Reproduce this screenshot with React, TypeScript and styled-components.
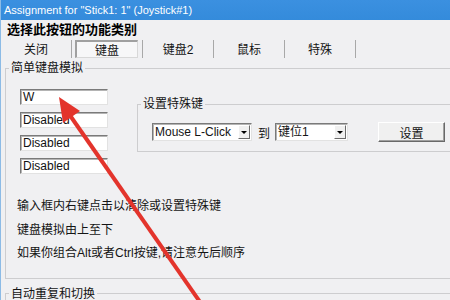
import styled, { createGlobalStyle } from "styled-components";

const GlobalStyle = createGlobalStyle`
  html, body {
    margin: 0;
    padding: 0;
    overflow: hidden;
  }
  body {
    background: #f0f0f2;
    font-family: "Liberation Sans", "Noto Sans CJK SC", sans-serif;
  }
`;

const Window = styled.div`
  position: relative;
  width: 450px;
  height: 300px;
  overflow: hidden;
  box-sizing: border-box;
  border-left: 1px solid #8cbbe6;
  background: #f0f0f2;
  color: #141414;
  font-size: 12px;
`;

const TitleBar = styled.div`
  height: 20px;
  line-height: 20px;
  padding-left: 3px;
  background: linear-gradient(#3b90e0, #348bdb);
  color: #fff;
  font-size: 11px;
  white-space: nowrap;
`;

const Heading = styled.div`
  margin: 2px 0 0 6px;
  font-size: 13px;
  font-weight: bold;
  line-height: 16px;
  color: #000;
`;

const TabRow = styled.div`
  display: flex;
  height: 18px;
  margin-top: 2px;
`;

const Tab = styled.div`
  width: 71px;
  box-sizing: border-box;
  border-right: 1px solid #a8a8a8;
  display: flex;
`;

const TabLabel = styled.span<{ $active?: boolean }>`
  flex: 1;
  display: flex;
  align-items: center;
  justify-content: center;
  line-height: 14px;
  padding-top: 2px;
  ${(p) =>
    p.$active &&
    `
    margin: 0 4px 0 3px;
    border-top: 2px solid #a0a0a0;
    border-left: 2px solid #a0a0a0;
    border-right: 1px solid #d8d8d8;
    border-bottom: 1px solid #d8d8d8;
    background: #f7f7f8;
  `}
`;

const Group = styled.fieldset<{ $top: number }>`
  margin: ${(p) => p.$top}px 0 0 4px;
  width: 470px;
  box-sizing: border-box;
  border: 1px solid #cdcdcf;
  padding: 14px 0 12px 0;
  min-width: 0;
`;

const Legend = styled.legend`
  margin-left: 3px;
  padding: 0 2px;
  font-size: 12px;
  line-height: 14px;
`;

const KeyArea = styled.div`
  display: flex;
  align-items: flex-start;
`;

const InputCol = styled.div`
  display: flex;
  flex-direction: column;
  gap: 7px;
  margin-left: 14px;
`;

const KeyInput = styled.div`
  width: 88px;
  height: 16px;
  box-sizing: border-box;
  background: #fff;
  border-top: 1px solid #7a7a7a;
  border-left: 1px solid #7a7a7a;
  border-right: 1px solid #e2e2e2;
  border-bottom: 1px solid #e2e2e2;
  box-shadow: inset 1px 1px 0 #b4b4b4;
  padding-left: 2px;
  font-size: 12px;
  line-height: 14px;
  color: #111;
`;

const SpecialGroup = styled.fieldset`
  flex: 1;
  margin: 8px 0 0 29px;
  border: 1px solid #cdcdcf;
  padding: 11px 0 9px 0;
  min-width: 0;
`;

const SpecialRow = styled.div`
  display: flex;
  align-items: center;
  padding-left: 14px;
`;

const Combo = styled.div<{ $w: number }>`
  width: ${(p) => p.$w}px;
  height: 18px;
  box-sizing: border-box;
  display: flex;
  align-items: center;
  background: #fff;
  border-top: 1px solid #7a7a7a;
  border-left: 1px solid #7a7a7a;
  border-right: 1px solid #e2e2e2;
  border-bottom: 1px solid #e2e2e2;
  box-shadow: inset 1px 1px 0 #b4b4b4;
  padding-left: 2px;
  font-size: 12px;
  line-height: 14px;
`;

const ComboText = styled.span`
  flex: 1;
  white-space: nowrap;
`;

const ComboButton = styled.span`
  width: 12px;
  height: 14px;
  box-sizing: border-box;
  margin-right: 1px;
  display: flex;
  align-items: center;
  justify-content: center;
  background: #f0f0f0;
  border-top: 1px solid #fff;
  border-left: 1px solid #fff;
  border-right: 1px solid #6a6a6a;
  border-bottom: 1px solid #6a6a6a;

  &::after {
    content: "";
    border-left: 3px solid transparent;
    border-right: 3px solid transparent;
    border-top: 3px solid #000;
  }
`;

const To = styled.span`
  margin: 0 5px 0 6px;
`;

const SetButton = styled.div`
  width: 67px;
  height: 20px;
  box-sizing: border-box;
  margin-left: 30px;
  display: flex;
  align-items: center;
  justify-content: center;
  background: #f0f0f0;
  border-top: 1px solid #fff;
  border-left: 1px solid #fff;
  border-right: 1px solid #696969;
  border-bottom: 1px solid #696969;
  box-shadow: inset -1px -1px 0 #a0a0a0;
`;

const Notes = styled.div`
  margin: 21px 0 0 11px;
  line-height: 23.5px;
`;

const Arrow = styled.svg`
  position: absolute;
  left: 0;
  top: 0;
  pointer-events: none;
`;

const keys = ["W", "Disabled", "Disabled", "Disabled"];
const tabs = ["关闭", "键盘", "键盘2", "鼠标", "特殊"];

function App() {
  return (
    <>
      <GlobalStyle />
      <Window>
        <TitleBar>Assignment for "Stick1: 1" (Joystick#1)</TitleBar>
        <Heading>选择此按钮的功能类别</Heading>
        <TabRow>
          {tabs.map((t) => (
            <Tab key={t}>
              <TabLabel $active={t === "键盘"}>{t}</TabLabel>
            </Tab>
          ))}
        </TabRow>

        <Group $top={3}>
          <Legend>简单键盘模拟</Legend>
          <KeyArea>
            <InputCol>
              {keys.map((k, i) => (
                <KeyInput key={i}>{k}</KeyInput>
              ))}
            </InputCol>
            <SpecialGroup>
              <Legend>设置特殊键</Legend>
              <SpecialRow>
                <Combo $w={100}>
                  <ComboText>Mouse L-Click</ComboText>
                  <ComboButton />
                </Combo>
                <To>到</To>
                <Combo $w={73}>
                  <ComboText>键位1</ComboText>
                  <ComboButton />
                </Combo>
                <SetButton>设置</SetButton>
              </SpecialRow>
            </SpecialGroup>
          </KeyArea>
          <Notes>
            <div>输入框内右键点击以清除或设置特殊键</div>
            <div>键盘模拟由上至下</div>
            <div>如果你组合Alt或者Ctrl按键,请注意先后顺序</div>
          </Notes>
        </Group>

        <Group $top={8}>
          <Legend>自动重复和切换</Legend>
        </Group>

        <Arrow width="450" height="300" viewBox="0 0 450 300">
          <line x1="68" y1="114" x2="206" y2="312" stroke="#e3342c" strokeWidth="4" />
          <polygon points="58,97 62,123 79,111" fill="#e3342c" />
        </Arrow>
      </Window>
    </>
  );
}

export default App;
